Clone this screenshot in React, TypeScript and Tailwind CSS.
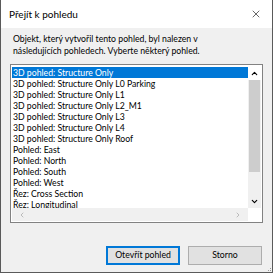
import { ChevronUp, ChevronDown, ChevronLeft, ChevronRight, X } from "lucide-react"

const views = [
    "3D pohled: Structure Only",
    "3D pohled: Structure Only L0 Parking",
    "3D pohled: Structure Only L1",
    "3D pohled: Structure Only L2_M1",
    "3D pohled: Structure Only L3",
    "3D pohled: Structure Only L4",
    "3D pohled: Structure Only Roof",
    "Pohled: East",
    "Pohled: North",
    "Pohled: South",
    "Pohled: West",
    "Řez: Cross Section",
    "Řez: Longitudinal",
]

const App = () => {
    return (
        <div className="w-[274px] h-[275px] bg-white font-['Lato',sans-serif] text-[8.7px] text-black">
            <div className="w-[273px] h-[273px] flex flex-col border border-t-0 border-[#5a5a5a]">
                {/* title bar */}
                <div className="h-[28px] bg-white flex items-center justify-between pl-[8px] pr-[10px] shrink-0">
                    <span className="text-[10px] leading-none">Přejít k pohledu</span>
                    <X size={12} strokeWidth={1.2} className="text-black" />
                </div>

                {/* body */}
                <div className="flex-1 bg-[#f0f0f0] flex flex-col px-[9px] pt-[5px] relative">
                    <p className="leading-[12px] pl-[3px] w-[215px]">
                        Objekt, který vytvořil tento pohled, byl nalezen v následujících pohledech. Vyberte některý pohled.
                    </p>

                    <div className="mt-[7px] h-[159px] border border-[#828282] bg-white p-px flex flex-col">
                        <div className="flex flex-1 min-h-0">
                            <div className="flex-1 overflow-hidden pt-px">
                                {views.map((v, i) => (
                                    <div
                                        key={v}
                                        className={`h-[11px] leading-[11px] pl-px whitespace-nowrap ${i === 0 ? "bg-[#0078d7] text-white" : ""}`}
                                    >
                                        {v}
                                    </div>
                                ))}
                            </div>
                            <div className="w-[13px] flex flex-col bg-[#f0f0f0]">
                                <div className="h-[14px] flex items-center justify-center bg-white">
                                    <ChevronUp size={9} strokeWidth={3} />
                                </div>
                                <div className="h-[92px] mx-px bg-[#cdcdcd]" />
                                <div className="flex-1" />
                                <div className="h-[14px] flex items-center justify-center">
                                    <ChevronDown size={9} strokeWidth={3} />
                                </div>
                            </div>
                        </div>
                        <div className="h-[13px] flex items-center justify-between px-[6px] bg-[#f0f0f0] mr-[13px] text-[#a0a0a0]">
                            <ChevronLeft size={8} strokeWidth={2} />
                            <ChevronRight size={8} strokeWidth={2} />
                        </div>
                    </div>

                    <div className="flex justify-end gap-[8px] mt-[23px] pr-px">
                        <button className="w-[74px] h-[19px] bg-[#e1e1e1] border-2 border-[#0078d7] leading-none whitespace-nowrap">
                            Otevřít pohled
                        </button>
                        <button className="w-[74px] h-[19px] bg-[#e1e1e1] border border-[#adadad] leading-none whitespace-nowrap">
                            Storno
                        </button>
                    </div>

                    <div className="absolute right-[1px] bottom-[1px] grid grid-cols-3 gap-px w-[5px]">
                        <span />
                        <span />
                        <span className="w-px h-px bg-[#999]" />
                        <span />
                        <span className="w-px h-px bg-[#999]" />
                        <span className="w-px h-px bg-[#999]" />
                    </div>
                </div>
            </div>
        </div>
    )
}

export default App
